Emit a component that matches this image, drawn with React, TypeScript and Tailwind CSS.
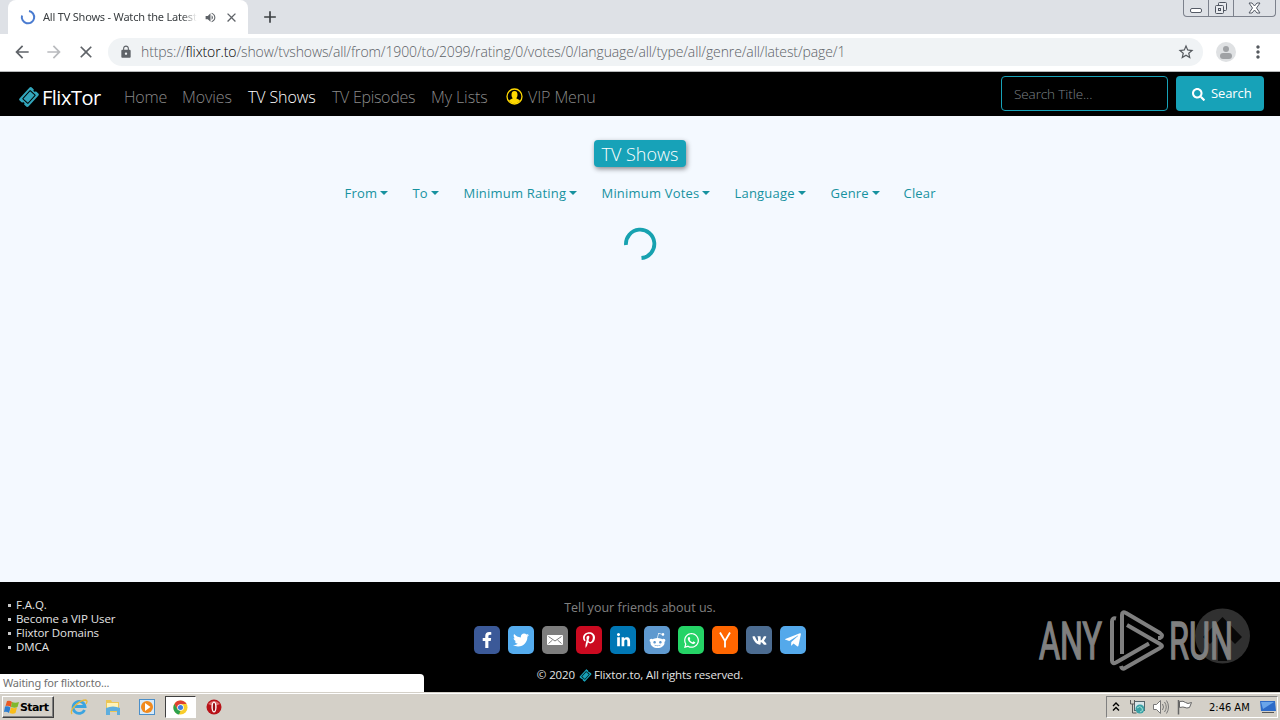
import React from 'react';
import {
  FaFacebookF,
  FaLinkedinIn,
  FaPinterestP,
  FaRedditAlien,
  FaSearch,
  FaTelegramPlane,
  FaTicketAlt,
  FaTwitter,
  FaVk,
  FaWhatsapp,
} from 'react-icons/fa';
import { MdArrowBack, MdArrowForward, MdClose, MdLock, MdMoreVert, MdStarBorder, MdAdd, MdVolumeUp } from 'react-icons/md';

const navItems = [
  { label: 'Home', style: 'w-[58px] tracking-[-0.2px] text-[#8a8a8a]' },
  { label: 'Movies', style: 'w-[66px] tracking-[-0.1px] text-[#8a8a8a]' },
  { label: 'TV Shows', style: 'w-[84px] tracking-[-0.1px] text-white' },
  { label: 'TV Episodes', style: 'w-[99px] tracking-[-0.3px] text-[#8a8a8a]' },
  { label: 'My Lists', style: 'w-[75px] tracking-[-0.1px] text-[#8a8a8a]' },
];

const filters = [
  { label: 'From', width: 'w-[68px]', caret: true },
  { label: 'To', width: 'w-[51px]', caret: true },
  { label: 'Minimum Rating', width: 'w-[138px]', caret: true },
  { label: 'Minimum Votes', width: 'w-[133px]', caret: true },
  { label: 'Language', width: 'w-[96px]', caret: true },
  { label: 'Genre', width: 'w-[73px]', caret: true },
  { label: 'Clear', width: 'w-[32px]', caret: false },
];

const shares = [
  { color: 'bg-[#3b5998]', icon: <FaFacebookF size={16} /> },
  { color: 'bg-[#55acee]', icon: <FaTwitter size={16} /> },
  { color: 'bg-[#7d7d7d]', icon: <MailIcon /> },
  { color: 'bg-[#cb0a20]', icon: <FaPinterestP size={16} /> },
  { color: 'bg-[#0077b5]', icon: <FaLinkedinIn size={15} /> },
  { color: 'bg-[#5f99cf]', icon: <FaRedditAlien size={17} /> },
  { color: 'bg-[#25d366]', icon: <FaWhatsapp size={17} /> },
  { color: 'bg-[#ff6600]', icon: <YIcon /> },
  { color: 'bg-[#4c6c91]', icon: <FaVk size={15} /> },
  { color: 'bg-[#54a9eb]', icon: <FaTelegramPlane size={18} /> },
];

function MailIcon() {
  return (
    <svg width="16" height="12" viewBox="0 0 16 12">
      <rect y="1" width="16" height="10" rx="1" fill="#fff" />
      <path d="M1.500 2.500 8 7l6.500-4.500M1.500 9.500 5.500 6M14.500 9.500 10.500 6" fill="none" stroke="#7d7d7d" />
    </svg>
  );
}

function YIcon() {
  return (
    <svg width="14" height="18" viewBox="0 0 14 18">
      <path d="M2 1.500 7 10l5-8.500M7 10v6.500" fill="none" stroke="#fff" strokeWidth="1.800" />
    </svg>
  );
}

function BrowserTabs() {
  return (
    <div className="flex h-[34px] items-stretch bg-[#dee1e6]">
      <div className="ml-2 flex w-[240px] items-center rounded-t-lg bg-white pl-3">
        <svg width="16" height="16" viewBox="0 0 16 16" className="shrink-0">
          <path d="M9 2A6.200 6.200 0 1 1 2 6.500" fill="none" stroke="#4a7bd0" strokeWidth="2" />
        </svg>
        <div className="ml-[7px] w-[154px] overflow-hidden font-['Noto_Sans'] text-[11px] tracking-[-0.2px] whitespace-nowrap text-[#3c4043] [mask-image:linear-gradient(to_right,black_90%,transparent)]">
          All TV Shows - Watch the Latest
        </div>
        <MdVolumeUp size={13} className="ml-[7px] shrink-0 text-[#5f6368]" />
        <MdClose size={15} className="ml-[7px] shrink-0 text-[#5f6368]" />
      </div>
      <MdAdd size={20} className="mt-[7px] ml-3 text-[#3c4043]" />
      <div className="mr-[4px] ml-auto flex h-[17px] w-[93px] rounded-b-[4px] border border-t-0 border-[#7c818c]">
        <div className="flex w-[25px] items-end justify-center border-r border-[#7c818c] pb-[3px]">
          <div className="h-[5px] w-3 rounded-[2px] border border-[#555b66] bg-white" />
        </div>
        <div className="flex w-[25px] items-center justify-center border-r border-[#7c818c]">
          <svg width="14" height="14" viewBox="0 0 14 14" fill="#e8eaee" stroke="#4f5560">
            <rect x="4.500" y="1.500" width="8" height="8" rx="1" />
            <rect x="1.500" y="4.500" width="8" height="8" rx="1" />
            <rect x="4.500" y="7.500" width="2" height="2" />
          </svg>
        </div>
        <div className="flex flex-1 items-center justify-center">
          <svg width="13" height="12" viewBox="0 0 13 12">
            <path d="M1 1h3l2.500 3L9 1h3L8.500 6 12 11H9L6.500 8 4 11H1l3.500-5z" fill="#fff" stroke="#555b66" />
          </svg>
        </div>
      </div>
    </div>
  );
}

function Toolbar() {
  return (
    <div className="flex h-[38px] items-center border-b border-[#b6b8ba] bg-white pb-px">
      <MdArrowBack size={20} className="ml-3 text-[#5f6368]" />
      <MdArrowForward size={20} className="ml-3 text-[#b9bbbe]" />
      <MdClose size={20} className="ml-3 text-[#5f6368]" />
      <div className="ml-3 flex h-7 w-[1095px] items-center rounded-full bg-[#f0f3f5] pr-2 pl-[11px]">
        <MdLock size={14} className="text-[#5f6368]" />
        <div className="mb-px ml-2 font-['Open_Sans'] text-[14px] font-light tracking-[-0.115px] whitespace-nowrap text-[#5c6166]">
          https://<span className="text-black">flixtor.to</span>/show/tvshows/all/from/1900/to/2099/rating/0/votes/0/language/all/type/all/genre/all/latest/page/1
        </div>
        <MdStarBorder size={18} className="ml-auto text-[#55595e]" />
      </div>
      <div className="ml-[13px] flex size-5 flex-col items-center justify-center gap-px rounded-full bg-[#dfe1e3]">
        <div className="size-[6px] rounded-full bg-[#a0a2a5]" />
        <div className="h-[6px] w-3 rounded-full bg-[#a0a2a5]" />
      </div>
      <MdMoreVert size={20} className="ml-3 text-[#55595e]" />
    </div>
  );
}

function Navbar() {
  return (
    <nav className="flex h-11 items-center bg-black pl-5 font-light">
      <FaTicketAlt size={18} className="mt-[6px] shrink-0 -rotate-[48deg] text-[#32a5bb]" />
      <div className="mt-[7px] ml-1 w-[82px] text-[20px] font-normal tracking-[-0.5px] text-white">FlixTor</div>
      {navItems.map((item) => (
        <div key={item.label} className={`mt-[6px] shrink-0 text-[16px] whitespace-nowrap ${item.style}`}>
          {item.label}
        </div>
      ))}
      <svg width="17" height="17" viewBox="0 0 17 17" className="mt-[4px] shrink-0">
        <circle cx="8.500" cy="8.500" r="7.500" fill="none" stroke="#ffd900" strokeWidth="1.300" />
        <path d="M8.500 3C6.300 3 5.500 4.600 5.500 6.500c0 1.700.4 3 1.300 3.700L3 12.300c1.300 2.300 3.300 3.200 5.500 3.200s4.200-.9 5.500-3.200l-3.800-2.100c.9-.7 1.300-2 1.300-3.700 0-1.900-.8-3.500-3-3.500z" fill="#ffd900" />
      </svg>
      <div className="mt-[6px] ml-[5px] text-[16px] tracking-[-0.1px] whitespace-nowrap text-[#8a8a8a]">VIP Menu</div>
      <div className="mr-2 mb-px ml-auto flex h-[35px] w-[167px] items-center rounded-[4px] border border-[#17a2b8] pt-px pl-3 text-[13.5px] tracking-[-0.1px] text-[#7d8388]">
        Search Title...
      </div>
      <div className="mr-4 mb-px flex h-[35px] w-[88px] items-center rounded-[4px] bg-[#17a2b8] pt-px pl-4 text-[13px] font-normal tracking-[-0.1px] text-white">
        <FaSearch size={13} className="mr-[6px]" />
        Search
      </div>
    </nav>
  );
}

function Content() {
  return (
    <main className="flex h-[466px] flex-col items-center bg-[#f4f9ff] pt-6">
      <h1 className="flex h-[27px] w-[92px] items-center justify-center rounded-[4px] bg-[#17a2b8] pt-[2px] text-[18px] font-light whitespace-nowrap text-white shadow-[1px_2px_5px_rgba(0,0,0,0.45)]">
        TV Shows
      </h1>
      <div className="mt-[15px] flex h-6 w-[591px] items-center text-[13px] tracking-[0.2px] whitespace-nowrap text-[#17929f]">
        {filters.map((filter) => (
          <div key={filter.label} className={`flex shrink-0 items-center ${filter.width}`}>
            {filter.label}
            {filter.caret && <span className="mt-[-2px] ml-[3px] border-x-[4px] border-t-[4px] border-x-transparent border-t-[#17929f]" />}
          </div>
        ))}
      </div>
      <svg width="34" height="34" viewBox="0 0 34 34" className="mt-[21px]">
        <path d="M3 18A14.200 14.200 0 1 1 18.500 31" fill="none" stroke="#17a2b0" strokeWidth="3.800" />
      </svg>
    </main>
  );
}

function AnyRun() {
  return (
    <svg width="220" height="70" viewBox="1035 605 220 70" className="absolute top-[23px] left-[1035px]">
      <circle cx="1222.500" cy="636" r="27.500" fill="#303030" />
      <path d="m1203 637 19.500-20 19.500 20-7 7-8-8v25h-9v-25l-8 8z" fill="#080808" />
      <g fill="#808080" stroke="#808080" strokeWidth="1.500" fontFamily="Roboto" fontSize="51" fontWeight="400">
        <text x="1039" y="658.500" textLength="63" lengthAdjust="spacingAndGlyphs">ANY</text>
        <text x="1169" y="658.500" textLength="64" lengthAdjust="spacingAndGlyphs">RUN</text>
      </g>
      <g fill="none" stroke="#7f7f7f" strokeWidth="4" strokeLinejoin="round">
        <path d="M1116 618.500q-4-1-4 3v39q0 4 4 2l33-19" />
        <path d="M1122 654v-39q0-4 4-2l34 20q4 3 0 5h-2" />
        <path d="m1127 625 33 19q4 2 0 4l-35 20q-3 2-4-2" />
      </g>
    </svg>
  );
}

function Footer() {
  return (
    <footer className="relative flex h-[110px] justify-center bg-black">
      <ul className="absolute top-4 left-2 text-[11.5px] leading-[14px] tracking-[-0.08px] text-[#e4e4e4]">
        {['F.A.Q.', 'Become a VIP User', 'Flixtor Domains', 'DMCA'].map((link) => (
          <li key={link} className="flex items-center gap-[5px] whitespace-nowrap">
            <span className="size-[3px] bg-[#c8c8c8]" />
            {link}
          </li>
        ))}
      </ul>
      <div className="flex flex-col items-center pt-4">
        <p className="h-7 text-[12.5px] leading-[19px] whitespace-nowrap text-[#808080]">Tell your friends about us.</p>
        <div className="flex gap-2">
          {shares.map((share) => (
            <div key={share.color} className={`flex h-7 w-[26px] items-center justify-center rounded-[5px] text-white ${share.color}`}>
              {share.icon}
            </div>
          ))}
        </div>
        <p className="mt-3 flex h-[18px] items-center text-[11.5px] tracking-[-0.12px] whitespace-nowrap text-[#e4e4e4]">
          © 2020 <FaTicketAlt size={11} className="mr-[3px] ml-[5px] -rotate-[48deg] text-[#17a2b8]" />
          Flixtor.to, All rights reserved.
        </p>
      </div>
      <AnyRun />
      <div className="absolute bottom-0 left-0 h-[18px] w-[424px] rounded-tr-[4px] bg-white pl-[3px] font-['Noto_Sans'] text-[11px] leading-[18px] tracking-[-0.2px] text-[#707070]">
        Waiting for flixtor.to...
      </div>
    </footer>
  );
}

function Taskbar() {
  return (
    <div className="flex h-7 items-center border-t border-[#d4d0c8] bg-[#d4d0c8] shadow-[inset_0_1px_0_white]">
      <div className="mt-px ml-[2px] flex h-[22px] w-[52px] items-center border border-t-white border-r-[#404040] border-b-[#404040] border-l-white pl-[1px] font-['DejaVu_Sans'] text-[11px] font-bold tracking-[-0.6px] text-black shadow-[inset_-1px_-1px_0_#808080]">
        <svg width="16" height="16" viewBox="0 0 16 16" className="shrink-0">
          <path d="M3 2q3-1 5 1L7 8Q4 6 1.500 7z" fill="#ea5a24" />
          <path d="M8 3q3 1.500 7 0l-1.500 5Q11 9.500 7 8z" fill="#7fb82d" />
          <path d="M1 7.500q3-1 5.500 1L5 14q-2.500-2-5-1z" fill="#2f7fd0" />
          <path d="M7 8.500q3 1.500 6 0L11.500 14q-2.500 1.500-6 0z" fill="#f9bd19" />
        </svg>
        <span className="mt-[2px]">Start</span>
      </div>
      <svg width="18" height="18" viewBox="0 0 18 18" className="mt-px ml-4">
        <path d="M14.500 12A6 6 0 1 1 15 8.500H5" fill="none" stroke="#3ba4e0" strokeWidth="2.800" />
        <path d="M2 16C-1 12 9 2 16 2q2 1 0 4" fill="none" stroke="#e8b93a" strokeWidth="1.300" />
      </svg>
      <svg width="18" height="18" viewBox="0 0 18 18" className="mt-px ml-4">
        <path d="M2 2h5l1 2h7v10H2z" fill="#ecc656" />
        <path d="M3 5h11v5H3z" fill="#fff3b8" />
        <path d="M2 10q7-3 14 0v7h-3v-4H6v4H2z" fill="#5eaede" />
      </svg>
      <svg width="18" height="18" viewBox="0 0 18 18" className="mt-px ml-4">
        <rect x="1.500" y="1.500" width="15" height="15" fill="#d6eafa" stroke="#4b8fc9" />
        <circle cx="9" cy="9" r="6" fill="#f18a1d" />
        <path d="m7 5 5.500 4L7 13z" fill="#fff" />
      </svg>
      <div className="mt-px ml-[9px] flex h-[22px] w-[31px] items-center justify-center border border-t-[#404040] border-r-white border-b-white border-l-[#404040] bg-white">
        <svg width="15" height="15" viewBox="0 0 16 16">
          <circle cx="8" cy="8" r="7.500" fill="#f9cd2b" />
          <path d="M1.500 4.200A7.500 7.500 0 0 1 14.500 4.300H8L4.800 10z" fill="#df4032" />
          <path d="M1.500 4.200 4.800 10 8 11.500l-1.500 4A7.500 7.500 0 0 1 1.500 4.200z" fill="#2ca14c" />
          <circle cx="8" cy="8" r="3.500" fill="#fff" />
          <circle cx="8" cy="8" r="2.700" fill="#3e7fe0" />
        </svg>
      </div>
      <svg width="16" height="16" viewBox="0 0 16 16" className="mt-px ml-[10px]">
        <circle cx="8" cy="8" r="7.500" fill="#b81218" />
        <path d="M2 5q6-6 12 0-6 3-12 0z" fill="#df6a6a" />
        <ellipse cx="8" cy="8" rx="2.600" ry="5.500" fill="#fff" />
        <ellipse cx="8" cy="8" rx="1.200" ry="4.300" fill="#9b1015" />
      </svg>
      <div className="mt-px mr-[2px] ml-auto flex h-[22px] w-[172px] items-center border border-t-[#808080] border-r-white border-b-white border-l-[#808080] pl-[5px]">
        <svg width="8" height="10" viewBox="0 0 8 10" fill="none" stroke="#000" strokeWidth="1.400">
          <path d="m1 4 3-3 3 3M1 8.500l3-3 3 3" />
        </svg>
        <svg width="17" height="16" viewBox="0 0 17 16" className="ml-[9px]">
          <rect x="5.500" y="2.500" width="10" height="9" fill="#d8e6ea" stroke="#55666c" />
          <path d="M1.500 1v4h4V1M3.500 5v9h4" fill="none" stroke="#5b5b5b" />
          <circle cx="11" cy="10" r="4.500" fill="#3aa1a6" />
          <path d="M8 9q3-3 5 0t-2 4" fill="none" stroke="#a5dfd2" />
        </svg>
        <svg width="17" height="16" viewBox="0 0 17 16" className="ml-[6px]" fill="none" stroke="#777">
          <path d="M1.500 5.500h3l4-4v13l-4-4h-3z" fill="#fff" />
          <path d="M10.500 5q2 3 0 6M12.500 3q3.500 5 0 10M14.500 1.500q4 6.500 0 13" />
        </svg>
        <svg width="17" height="16" viewBox="0 0 17 16" className="ml-[7px]">
          <path d="M3.500 2.500q4-1 6 1t6 0l-2 5q-3 1-4.500 0t-5.500 0z" fill="#fff" stroke="#666" />
          <path d="M2.500 1v14.500" stroke="#666" strokeWidth="1.500" />
        </svg>
        <div className="mt-[2px] ml-4 w-[51px] font-['DejaVu_Sans_Condensed'] text-[11px] whitespace-nowrap text-black">2:46 AM</div>
        <svg width="16" height="14" viewBox="0 0 16 14" className="shrink-0">
          <path d="M0 1h15l1 10H1z" fill="#2d6bc8" />
          <path d="M1 2h13L3 9z" fill="#6aa5ea" />
          <path d="M2 12h12v1H2z" fill="#555" />
        </svg>
      </div>
    </div>
  );
}

const App: React.FC = () => {
  return (
    <div className="h-[720px] w-[1280px] overflow-hidden font-['Open_Sans',sans-serif]">
      <BrowserTabs />
      <Toolbar />
      <Navbar />
      <Content />
      <Footer />
      <Taskbar />
    </div>
  );
};

export default App;
